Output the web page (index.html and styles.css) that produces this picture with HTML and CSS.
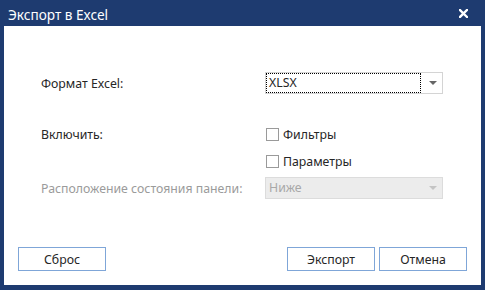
FILE: index.html
```html
<!DOCTYPE html>
<html lang="ru">
<head>
    <meta charset="UTF-8">
    <meta name="viewport" content="width=device-width, initial-scale=1.0">
    <title>Экспорт в Excel</title>
    <link rel="stylesheet" href="styles.css">
</head>
<body>
    <div class="dialog">
        <div class="titlebar">
            <span class="title">Экспорт в Excel</span>
            <span class="close">
                <svg width="9" height="9" viewBox="0 0 9 9">
                    <path d="M1 1 L8 8 M8 1 L1 8" stroke="#fff" stroke-width="2.4" stroke-linecap="square"/>
                </svg>
            </span>
        </div>

        <div class="content">
            <div class="form">
                <div class="row">
                    <label class="label">Формат Excel:</label>
                    <div class="select">
                        <span class="select-text">XLSX</span>
                        <span class="arrow"></span>
                    </div>
                </div>

                <div class="row group">
                    <label class="label">Включить:</label>
                    <label class="check"><span class="box"></span>Фильтры</label>
                </div>

                <div class="row">
                    <span></span>
                    <label class="check"><span class="box"></span>Параметры</label>
                </div>

                <div class="row">
                    <label class="label disabled">Расположение состояния панели:</label>
                    <div class="select is-disabled">
                        <span class="select-text">Ниже</span>
                        <span class="arrow"></span>
                    </div>
                </div>
            </div>

            <div class="footer">
                <button class="btn">Сброс</button>
                <div class="right">
                    <button class="btn">Экспорт</button>
                    <button class="btn">Отмена</button>
                </div>
            </div>
        </div>
    </div>
</body>
</html>
```

FILE: styles.css
```css
body {
    margin: 0;
    font-family: "Noto Sans", "Open Sans", sans-serif;
    font-size: 12.3px;
    color: #262626;
}
.dialog {
    width: 485px;
    height: 290px;
    box-sizing: border-box;
    background-color: #1e3b70;
    padding: 0 4px 5px 4px;
    display: flex;
    flex-direction: column;
}
.titlebar {
    height: 26px;
    display: flex;
    align-items: center;
    justify-content: space-between;
    padding: 0 13px 0 4px;
    color: #fff;
}
.title {
    font-size: 13.6px;
    position: relative;
    top: 1px;
}
.close {
    display: flex;
}
.content {
    flex: 1;
    background-color: #fff;
    display: flex;
    flex-direction: column;
    padding: 46px 14px 14px 14px;
}
.form {
    display: flex;
    flex-direction: column;
    padding-left: 23px;
}
.row {
    display: grid;
    grid-template-columns: 224px 178px;
    height: 22px;
    align-items: center;
}
.row + .row {
    margin-top: 5px;
}
.row.group {
    margin-top: 29px;
}
.label.disabled {
    color: #9b9b9b;
}
.select {
    box-sizing: border-box;
    height: 22px;
    border: 1px solid #d4d4d4;
    display: flex;
    align-items: center;
    padding: 0 0 0 1px;
}
.select-text {
    flex: 1;
    height: 18px;
    line-height: 18px;
    padding-left: 2px;
    outline: 1px dotted #000;
    margin-right: 9px;
}
.arrow {
    width: 0;
    height: 0;
    border-left: 4px solid transparent;
    border-right: 4px solid transparent;
    border-top: 4px solid #666;
    margin-right: 5px;
}
.select.is-disabled {
    background-color: #ececec;
    border-color: #dcdcdc;
    color: #a8a8a8;
}
.select.is-disabled .select-text {
    outline: none;
}
.select.is-disabled .arrow {
    border-top-color: #c4c4c4;
}
.check {
    display: flex;
    align-items: center;
    gap: 4px;
    margin-left: 1px;
}
.box {
    width: 13px;
    height: 13px;
    box-sizing: border-box;
    border: 1px solid #9a9a9a;
    background-color: #fff;
}
.footer {
    margin-top: auto;
    display: flex;
    justify-content: space-between;
}
.right {
    display: flex;
    gap: 4px;
}
.btn {
    width: 88px;
    height: 24px;
    background-color: #fff;
    border: 1px solid #7fa6d8;
    font-family: inherit;
    font-size: 12.3px;
    color: #262626;
    padding: 0;
    cursor: pointer;
}
```
